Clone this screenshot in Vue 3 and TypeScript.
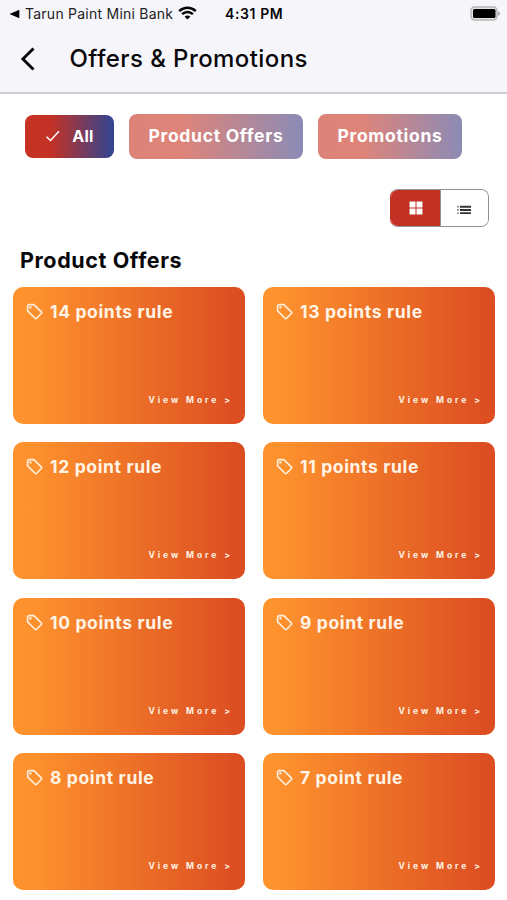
<script setup lang="ts">
import { ref } from 'vue'

type Filter = 'All' | 'Product Offers' | 'Promotions'

const filters: Filter[] = ['All', 'Product Offers', 'Promotions']
const active = ref<Filter>('All')
const view = ref<'grid' | 'list'>('grid')
const offers: string[] = [
  '14 points rule',
  '13 points rule',
  '12 point rule',
  '11 points rule',
  '10 points rule',
  '9 point rule',
  '8 point rule',
  '7 point rule',
]
</script>

<template>
  <div class="screen">
    <header class="header">
      <div class="status">
        <div class="status-left">
          <svg class="back-tri" width="11" height="10" viewBox="0 0 11 10"><path d="M0.500 5 10.300 0.800V9.200Z" /></svg>
          <span class="app-name">Tarun Paint Mini Bank</span>
          <svg class="wifi" width="19" height="14" viewBox="0 0 19 14">
            <path d="M1.200 5.200C6 .7 13 .7 17.800 5.200" />
            <path d="M4.100 8.200C7.200 5.300 11.800 5.300 14.900 8.200" />
            <path class="dot" d="M6.600 10.700C8.300 9.200 10.700 9.200 12.400 10.700L9.500 13.600Z" />
          </svg>
        </div>
        <span class="time">4:31 PM</span>
        <svg class="battery" width="31" height="15" viewBox="0 0 31 15">
          <rect class="shell" x="1" y="1" width="26" height="13" rx="3.500" />
          <rect x="3" y="3" width="22.500" height="9" rx="1.500" />
          <path class="cap" d="M28 5.200C30.600 6 30.600 9 28 9.800Z" />
        </svg>
      </div>
      <div class="nav">
        <svg class="chevron" width="16" height="26" viewBox="0 0 16 26"><path d="M13.500 2.500 2.900 13 13.500 23.500" /></svg>
        <h1 class="title">Offers &amp; Promotions</h1>
      </div>
    </header>

    <div class="filters">
      <button
        v-for="f in filters"
        :key="f"
        class="chip"
        :class="{ active: f === active }"
        @click="active = f"
      >
        <svg v-if="f === active" class="check" width="16" height="14" viewBox="0 0 16 14"><path d="M1.500 7.800 5.500 11.500 14 2.300" /></svg>
        <span>{{ f }}</span>
      </button>
    </div>

    <div class="toolbar">
      <div class="toggle">
        <button class="side" :class="{ on: view === 'grid' }" aria-label="Grid" @click="view = 'grid'">
          <svg width="14" height="14" viewBox="0 0 14 14">
            <path d="M.5.500h6v6h-6zM7.500.500h6v6h-6zM.5 7.500h6v6h-6zM7.500 7.500h6v6h-6z" />
          </svg>
        </button>
        <button class="side list" :class="{ on: view === 'list' }" aria-label="List" @click="view = 'list'">
          <svg width="16" height="10" viewBox="0 0 16 10">
            <path class="bullets" d="M1 .8h1.800v1.700h-1.800zM1 4.100h1.800v1.700h-1.800zM1 7.400h1.800v1.700h-1.800z" />
            <path d="M4 .8h11v1.900h-11zM4 4h11v1.900h-11zM4 7.200h11v1.900h-11z" />
          </svg>
        </button>
      </div>
    </div>

    <h2 class="section">Product Offers</h2>

    <main class="grid">
      <article v-for="offer in offers" :key="offer" class="card">
        <div class="card-head">
          <svg class="tag" width="18" height="18" viewBox="0 0 18 18">
            <path d="M1.600 3.100A1.500 1.500 0 0 1 3.100 1.600H7.800L15.300 8.900Q16.100 9.700 15.300 10.500L10.600 15.300Q9.800 16.100 9 15.300L1.600 7.900Z" />
            <circle cx="4.400" cy="4.400" r="1.200" />
          </svg>
          <h3 class="card-title">{{ offer }}</h3>
        </div>
        <span class="more">View More &gt;</span>
      </article>
    </main>
  </div>
</template>

<style>
body {
  margin: 0;
  background: #fff;
}
</style>

<style scoped>
.screen {
  width: 507px;
  height: 900px;
  overflow: hidden;
  background: #fff;
  font-family: Inter, "Liberation Sans", sans-serif;
  color: #08080a;
}
h1, h2, h3 {
  margin: 0;
}
button {
  margin: 0;
  padding: 0;
  border: 0;
  font-family: inherit;
  background: none;
}
.header {
  box-sizing: border-box;
  height: 94px;
  background: #f6f5fa;
  border-bottom: 2px solid #d0d0d3;
}
.status {
  display: grid;
  grid-template-columns: 225px 1fr auto;
  align-items: center;
  height: 27px;
  padding-right: 6px;
}
.status-left {
  display: flex;
  align-items: center;
  padding-left: 9px;
}
.app-name {
  margin-left: 5px;
  width: 148px;
  font-size: 14px;
  letter-spacing: 0.24px;
  white-space: nowrap;
  color: #222225;
}
.wifi {
  margin: 0 0 1px 5px;
  fill: none;
  stroke: #050505;
  stroke-width: 2.5;
}
.wifi .dot {
  fill: #050505;
  stroke: none;
}
.time {
  font-size: 14px;
  font-weight: 600;
  letter-spacing: 0.6px;
}
.battery .shell {
  fill: #e4e4e5;
  stroke: #b5b5b7;
  stroke-width: 1.4;
}
.battery .cap {
  fill: #aaa;
}
.nav {
  display: flex;
  align-items: center;
  height: 64px;
  padding-left: 20px;
}
.chevron {
  fill: none;
  stroke: #050505;
  stroke-width: 2.9;
}
.title {
  margin-left: 33.5px;
  font-size: 24px;
  font-weight: 500;
  line-height: 30px;
  letter-spacing: 0.42px;
}
.filters {
  display: flex;
  align-items: center;
  gap: 15px;
  height: 45px;
  padding: 20px 0 0 25px;
}
.chip {
  display: flex;
  align-items: center;
  justify-content: center;
  box-sizing: border-box;
  height: 45px;
  width: 174px;
  padding-bottom: 2px;
  border-radius: 8px;
  color: #fff;
  font-size: 17.5px;
  font-weight: 700;
  letter-spacing: 0.7px;
  background: linear-gradient(90deg, #dc8379 0%, #df8479 30%, #8d8bb4 98%);
}
.chip:last-child {
  width: 144px;
}
.chip.active {
  width: 89px;
  height: 43px;
  font-size: 16px;
  letter-spacing: 0.3px;
  background: linear-gradient(90deg, #c63224 0%, #c23226 30%, #334590 98%);
}
.check {
  margin-right: 11px;
  fill: none;
  stroke: #fff;
  stroke-width: 1.5;
}
.toolbar {
  display: flex;
  justify-content: flex-end;
  padding: 30px 18px 0 0;
}
.toggle {
  display: flex;
  box-sizing: border-box;
  width: 99px;
  height: 38px;
  border: 1.5px solid #929292;
  border-radius: 8px;
  overflow: hidden;
}
.side {
  flex: 1;
  display: flex;
  align-items: center;
  justify-content: center;
  background: #fff;
  fill: #333;
}
.side.on {
  background: #c33024;
  fill: #fff;
}
.side.list {
  flex: none;
  width: 48px;
  box-sizing: border-box;
  border-left: 1px solid #929292;
  padding: 3px 2px 0 0;
}
.bullets {
  fill: #888;
}
.toggle:has(.side:first-child.on) {
  border-left-color: #c33024;
}
.section {
  margin: 18px 0 0 20px;
  font-size: 21.5px;
  font-weight: 700;
  line-height: 30px;
  letter-spacing: 0.6px;
}
.grid {
  display: grid;
  grid-template-columns: 232px 232px;
  grid-auto-rows: 137px;
  gap: 18px;
  row-gap: 18.2px;
  padding: 12.2px 0 0 13px;
}
.card {
  display: flex;
  flex-direction: column;
  justify-content: space-between;
  box-sizing: border-box;
  padding: 13px 12px 18px 13px;
  border-radius: 10px;
  color: #fff4e6;
  background: linear-gradient(90deg, #ff942e 0%, #fd902d 10%, #dc4e22 96%);
}
.card-head {
  display: flex;
  align-items: center;
  height: 24px;
}
.tag {
  fill: none;
  stroke: #fff0de;
  stroke-width: 1.6;
}
.tag circle {
  fill: #fff0de;
  stroke: none;
}
.card-title {
  margin-left: 6px;
  font-size: 17.5px;
  font-weight: 700;
  line-height: 24px;
  letter-spacing: 0.64px;
}
.more {
  align-self: flex-end;
  font-size: 8.5px;
  font-weight: 700;
  line-height: 12px;
  letter-spacing: 2.95px;
}
</style>
